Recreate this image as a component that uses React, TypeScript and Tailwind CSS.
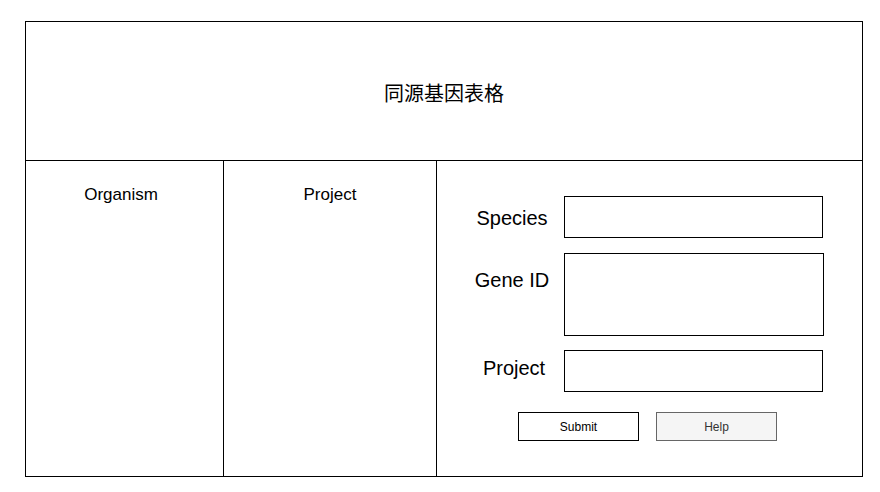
import React from 'react';

const latin = "font-['Liberation_Sans','Noto_Sans_CJK_SC',sans-serif]";

const Field: React.FC<{ label: string; box: string; labelPad: string; row?: string }> = ({ label, box, labelPad, row = '' }) => (
  <div className={`flex items-start ${row}`}>
    <div className={`w-[96px] text-center text-[20px] leading-[23px] text-black ${labelPad}`}>{label}</div>
    <div className={`ml-[4px] border border-black bg-white ${box}`} />
  </div>
);

const App: React.FC = () => {
  return (
    <div className={`w-[880px] h-[492px] bg-white pt-[21px] pl-[25px] ${latin}`}>
      <div className="w-[838px] h-[456px] border border-black flex flex-col">
        {/* Header */}
        <div className="h-[139px] border-b border-black flex items-center justify-center pt-[3px]">
          <span className="text-[20px] text-black font-['Noto_Sans_CJK_SC','Liberation_Sans',sans-serif]">同源基因表格</span>
        </div>

        <div className="flex flex-1">
          {/* Organism column */}
          <div className="w-[198px] border-r border-black pt-[24px] pr-[7px] text-center text-[17px] leading-[20px] text-black">
            Organism
          </div>

          {/* Project column */}
          <div className="w-[213px] border-r border-black pt-[24px] text-center text-[17px] leading-[20px] text-black">
            Project
          </div>

          {/* Form panel */}
          <div className="flex-1 pt-[35px] pl-[27px]">
            <div className="flex flex-col gap-[15px]">
              <Field label="Species" box="w-[259px] h-[42px]" labelPad="pt-[11px]" />
              <Field label="Gene ID" box="w-[260px] h-[83px]" labelPad="pt-[16px]" />
              <Field label="Project" box="w-[259px] h-[42px]" labelPad="pt-[7px] pl-[4px]" row="-mt-[1px]" />
            </div>
            <div className="flex gap-[17px] mt-[20px] pl-[54px]">
              <button className="w-[121px] h-[29px] border border-black bg-white text-[12px] text-black">Submit</button>
              <button className="w-[121px] h-[29px] border border-[#666666] bg-[#f5f5f5] text-[12px] text-[#333333]">Help</button>
            </div>
          </div>
        </div>
      </div>
    </div>
  );
};

export default App;
